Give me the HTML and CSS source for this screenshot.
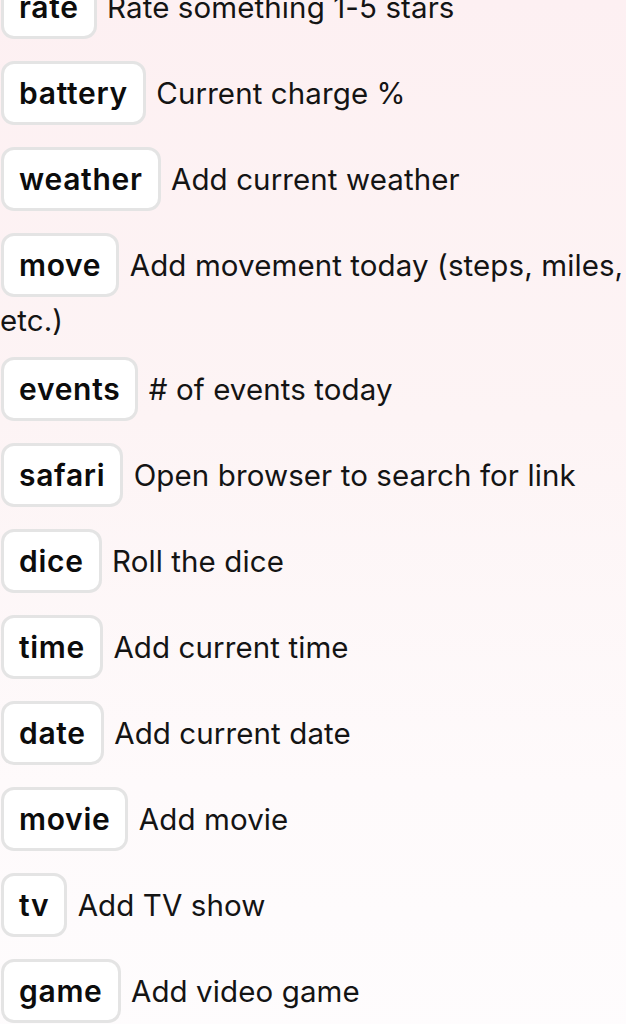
FILE: index.html
```html
<!DOCTYPE html>
<html lang="en">
<head>
<meta charset="utf-8">
<title>Commands</title>
<link rel="stylesheet" href="styles.css">
</head>
<body>
<main class="list">
  <p class="row"><code class="tag">rate</code> Rate something 1-5 stars</p>
  <p class="row"><code class="tag">battery</code> Current charge %</p>
  <p class="row"><code class="tag">weather</code> Add current weather</p>
  <p class="row"><code class="tag">move</code> Add movement today (steps, miles, etc.)</p>
  <p class="row"><code class="tag">events</code> # of events today</p>
  <p class="row"><code class="tag">safari</code> Open browser to search for link</p>
  <p class="row"><code class="tag">dice</code> Roll the dice</p>
  <p class="row"><code class="tag">time</code> Add current time</p>
  <p class="row"><code class="tag">date</code> Add current date</p>
  <p class="row"><code class="tag">movie</code> Add movie</p>
  <p class="row"><code class="tag">tv</code> Add TV show</p>
  <p class="row"><code class="tag">game</code> Add video game</p>
</main>
</body>
</html>
```

FILE: styles.css
```css
html, body {
  margin: 0;
  padding: 0;
}

body {
  min-height: 100vh;
  background: linear-gradient(to bottom, #fdf0f2 0%, #fdf4f5 40%, #fefafb 75%, #fefcfd 100%);
  font-family: Inter, "Noto Sans", "Liberation Sans", sans-serif;
  color: #141414;
  overflow: hidden;
}

.list {
  margin-top: -25px;
  padding: 0;
}

.row {
  margin: 0 0 18px 0;
  font-size: 29.5px;
  line-height: 38px;
  letter-spacing: 0.1px;
}

.tag {
  display: inline-block;
  margin: 0 2px 4px 1px;
  padding: 11px 15px;
  border: 3px solid #e4e4e4;
  border-radius: 13px;
  background: #ffffff;
  font-family: Inter, "Noto Sans", "Liberation Sans", sans-serif;
  font-size: 30px;
  font-weight: 600;
  line-height: 36px;
  color: #0c0c0c;
  letter-spacing: 0.7px;
}
```
